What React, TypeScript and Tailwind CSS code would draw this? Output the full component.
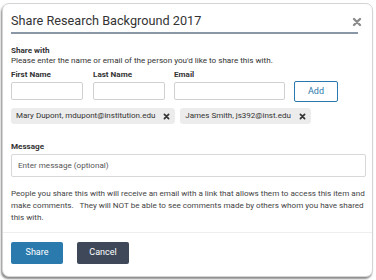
const people = [
  "Mary Dupont, mdupont@institution.edu",
  "James Smith, js392@inst.edu",
];

function CloseGlyph({ className }: { className?: string }) {
  return (
    <svg viewBox="0 0 10 10" className={className} aria-hidden>
      <path d="M2 2 L8 8 M8 2 L2 8" stroke="currentColor" strokeWidth="2.4" strokeLinecap="round" />
    </svg>
  );
}

export default function App() {
  return (
    <div className="w-[376px] h-[280px] bg-white pt-[3px] pl-[2px] font-['Roboto',sans-serif] text-[#333]">
      <div className="w-[371px] h-[274px] rounded-[7px] border border-[#d4d4d4] bg-white shadow-[-1px_2px_2px_rgba(0,0,0,0.45)] flex flex-col">
        <div className="px-2 pt-[8px]">
          <div className="flex items-center justify-between h-[19px]">
            <h2 className="text-[12.7px] leading-none text-[#333] m-0">Share Research Background 2017</h2>
            <CloseGlyph className="w-[10px] h-[10px] text-[#8c8c8c] mr-[2px]" />
          </div>
          <div className="mt-[1px] h-[2px] bg-[#8a97a6] mr-[6px]" />
        </div>

        <div className="px-2 pt-[11px]">
          <p className="text-[8.1px] font-bold leading-[10px] m-0">Share with</p>
          <p className="text-[8.1px] leading-[10px] m-0">
            Please enter the name or email of the person you'd like to share this with.
          </p>

          <div className="flex items-end mt-[4px]">
            <label className="flex flex-col w-[72px]">
              <span className="text-[8.1px] font-bold leading-[10px]">First Name</span>
              <input className="mt-[3px] h-[18px] border border-[#d0d0d0] rounded-[2px]" />
            </label>
            <label className="flex flex-col w-[72px] ml-[10px]">
              <span className="text-[8.1px] font-bold leading-[10px]">Last Name</span>
              <input className="mt-[3px] h-[18px] border border-[#d0d0d0] rounded-[2px]" />
            </label>
            <label className="flex flex-col w-[111px] ml-[9px]">
              <span className="text-[8.1px] font-bold leading-[10px]">Email</span>
              <input className="mt-[3px] h-[18px] border border-[#d0d0d0] rounded-[2px]" />
            </label>
            <button className="ml-[9px] h-[21px] w-[44px] border border-[#2a78ad] rounded-[2px] text-[#2a78ad] text-[9px] -mb-[2px]">
              Add
            </button>
          </div>

          <div className="flex gap-[5px] mt-[8px]">
            {people.map((p) => (
              <span
                key={p}
                className="flex items-center gap-[8px] h-[16px] pl-[5px] pr-[5px] rounded-[3px] bg-[#ececec] text-[8px] text-[#333]"
              >
                {p}
                <CloseGlyph className="w-[7px] h-[7px] text-[#333]" />
              </span>
            ))}
          </div>

          <p className="text-[8.1px] font-bold leading-[10px] m-0 mt-[17px]">Message</p>
          <input
            placeholder="Enter message (optional)"
            className="mt-[2px] w-[355px] h-[23px] px-[6px] border border-[#d8d8d8] rounded-[2px] text-[8.1px] placeholder:text-[#555]"
          />

          <p className="text-[8.1px] leading-[12px] text-[#444] m-0 mt-[10px] w-[362px]">
            People you share this with will receive an email with a link that allows them to access this item and
            make comments.&nbsp;&nbsp; They will NOT be able to see comments made by others whom you have shared
            this with.
          </p>
        </div>

        <div className="mt-[9px] border-t border-[#eeeeee] px-2 pt-[9px] flex gap-[14px]">
          <button className="w-[52px] h-[22px] rounded-[2px] bg-[#2a7aad] text-white text-[9px]">Share</button>
          <button className="w-[52px] h-[22px] rounded-[2px] bg-[#3e4859] text-white text-[9px]">Cancel</button>
        </div>
      </div>
    </div>
  );
}
